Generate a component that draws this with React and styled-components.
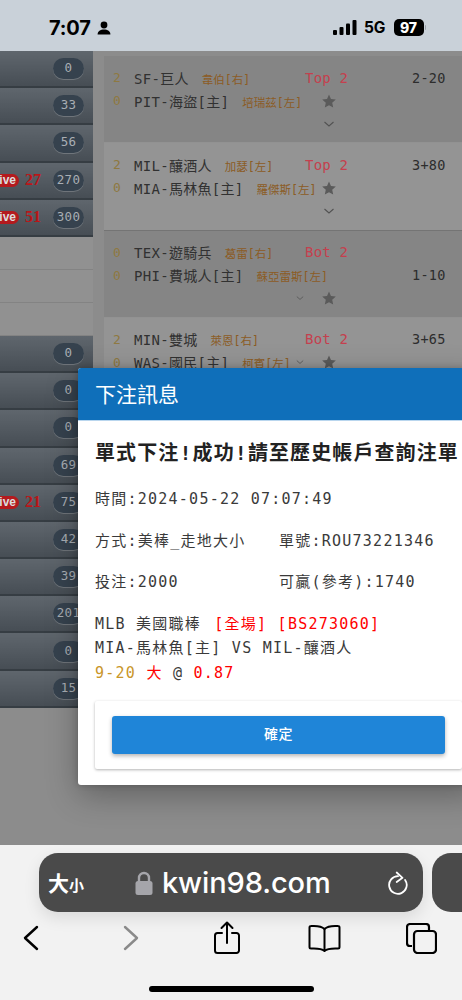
import React from "react";
import styled, { createGlobalStyle } from "styled-components";

const MONO = `"DejaVu Sans Mono", "Noto Sans CJK TC", monospace`;
const SANS = `Inter, "Noto Sans CJK TC", sans-serif`;

const Global = createGlobalStyle`
  html, body { margin: 0; padding: 0; background: #f2f2f2; }
  * { box-sizing: border-box; }
`;

const Screen = styled.div`
  width: 462px; height: 1000px; overflow: hidden; display: flex; flex-direction: column;
  font-family: ${MONO};
`;

const StatusBar = styled.header`
  height: 51px; flex: none; background: #c9d1d9; display: flex; align-items: center;
  padding: 4px 0 0 49px; color: #000;
`;
const Clock = styled.span`font: 700 20px/1 ${SANS}; letter-spacing: -0.2px;`;
const StatusRight = styled.div`margin-left: auto; margin-right: 36px; display: flex; align-items: center; gap: 0;`;
const Net = styled.span`font: 700 15.5px/1 ${SANS}; margin: 0 8px 0 7px;`;
const Battery = styled.span`
  width: 30px; height: 17px; border-radius: 5px; background: #000; color: #fff;
  font: 800 14px/17px ${SANS}; text-align: center; display: block;
`;
const BatteryCap = styled.span`width: 1.5px; height: 5px; margin-left: 1px; background: #9aa0a6; border-radius: 0 2px 2px 0;`;

const Viewport = styled.main`
  height: 794px; flex: none; position: relative; overflow: hidden; background: #f1f1f1;
  display: flex; align-items: flex-start;
`;
const Dim = styled.div`position: absolute; inset: 0; background: rgba(0,0,0,.42);`;

const Sidebar = styled.aside`width: 93px; flex: none; overflow: hidden; display: flex; flex-direction: column;`;
const DarkRow = styled.div`
  height: 37.2px; display: flex; align-items: center; justify-content: flex-end; padding-right: 9px;
  background: linear-gradient(#a4b0bc 0%, #96a2ae 35%, #7a8692 100%);
  border-bottom: 2px solid #5e6974; white-space: nowrap; flex: none;
`;
const LightRow = styled.div`
  height: 33px; background: #fafafa; border-bottom: 1px solid #e2e2e2; flex: none;
`;
const LiveBadge = styled.span`
  position: relative; z-index: 1;
  flex: none; width: 34px; height: 13px; border-radius: 7px; background: #b41a1e; color: #ddd;
  font: 700 12px/13px "Liberation Sans", sans-serif; text-align: right; padding-right: 3px; margin-right: 6px;
`;
const LiveCount = styled.span`
  position: relative; z-index: 1;
  flex: none; width: 16px; margin-right: 12px; color: #bb1518; font: 700 16px/1 "Liberation Serif", serif;
`;
const Pill = styled.span`
  position: relative; z-index: 1;
  flex: none; width: 31px; height: 21px; border-radius: 11px; background: #36424e; color: #a9aeb4;
  box-shadow: 0 1px 0 rgba(255,255,255,.2);
  font: 400 12.5px/20px ${MONO}; letter-spacing: .3px; text-align: center; overflow: hidden;
`;

const Main = styled.section`
  margin: 5px 0 0 11px; flex: 1; min-width: 0; display: flex; flex-direction: column;
`;
const Card = styled.article`
  height: 87.3px; padding: 10px 0 0 9px; background: ${p => (p.$alt ? "#ffffff" : "#e6e6e6")};
  border-bottom: 1px solid ${p => (p.$alt ? "#c8c8c8" : "#fbfbfb")};
  display: grid; grid-template-columns: 21px 160px 11px 107px 1fr; grid-auto-rows: 23px; align-items: center;
  white-space: nowrap;
`;
const Score = styled.span`grid-column: 1; color: #f5d070; font-size: 13px;`;
const Team = styled.div`grid-column: 2 / span 2; font-size: 14px; letter-spacing: .3px; color: #555;`;
const Pitcher = styled.span`margin-left: 13px; font-size: 11.5px; letter-spacing: 0; color: #f0a040;`;
const Status = styled.span`
  position: relative; z-index: 1;
  grid-column: 4; color: #c4404e; font-size: 14px; letter-spacing: .2px;
`;
const Value = styled.span`grid-column: 5; color: #4e4e4e; font-size: 13.5px; letter-spacing: .3px;`;
const StarCell = styled.span`grid-column: 4; margin-left: 17px; display: flex; color: #9b9b9b;`;
const ChevRight = styled.span`grid-column: 4; margin-left: 17px; display: flex; color: #8d8d8d;`;
const ChevLeft = styled.span`grid-column: 3; margin-left: 1px; display: flex; color: #8d8d8d;`;

const Modal = styled.div`
  position: absolute; z-index: 2; left: 78px; top: 317px; width: 401px; height: 417px; background: #fff;
  border-radius: 3px; box-shadow: 0 10px 32px rgba(0,0,0,.3), 0 0 6px rgba(0,0,0,.2);
  display: flex; flex-direction: column; overflow: hidden;
`;
const ModalHead = styled.div`
  height: 53px; flex: none; background: #0f6fba; color: #fff; padding-left: 17px;
  font: 400 21px/51px "Noto Sans CJK TC", sans-serif; border-bottom: 1px solid #b9d6ee;
`;
const ModalBody = styled.div`padding: 19px 17px 0 17px; flex: 1; color: #333; display: flex; flex-direction: column;`;
const Title = styled.h2`
  margin: 0 0 23px; font: 700 20px/26px ${MONO}; letter-spacing: 1.1px; color: #222; white-space: nowrap;
`;
const InfoRow = styled.div`
  display: grid; grid-template-columns: 184px 1fr; height: 41.5px; font-size: 15px; letter-spacing: 1.24px;
  line-height: 20px; white-space: nowrap; color: #3a3a3a;
`;
const Ticket = styled.div`margin-top: -2px; font-size: 15px; letter-spacing: 1.24px; line-height: 24.5px; white-space: nowrap; color: #3a3a3a;`;
const Red = styled.span`color: #f00;`;
const RedTag = styled(Red)`margin-left: 3px;`;
const Gold = styled.span`color: #c9962a;`;
const ButtonCard = styled.div`
  margin: 16px 0 0 0; width: 367px; height: 68px; padding: 15px 17px; background: #fff; border-radius: 2px;
  box-shadow: 0 1px 3px rgba(0,0,0,.3);
`;
const Confirm = styled.button`
  display: block; width: 333px; height: 38px; border: 0; border-radius: 3px; background: #1f85d8; color: #fff;
  font: 500 14px/34px "Noto Sans CJK TC", sans-serif; padding: 0 0 4px; letter-spacing: .5px;
  box-shadow: 0 2px 4px rgba(0,0,0,.3);
`;

const Safari = styled.footer`
  flex: 1; background: #f2f2f2; display: flex; flex-direction: column; padding-top: 8px;
`;
const UrlRow = styled.div`display: flex; gap: 9px; padding-left: 39px; height: 59px; flex: none;`;
const UrlBar = styled.div`
  width: 384px; flex: none; border-radius: 19px; background: #4a4a4a; color: #fff; display: flex; align-items: center;
  padding: 0 15px 0 9px; box-shadow: 0 6px 16px rgba(0,0,0,.1);
`;
const NextTab = styled.div`flex: 1; border-radius: 19px 0 0 19px; background: #4a4a4a;`;
const Aa = styled.span`font: 700 21px/1 "Noto Sans CJK TC", sans-serif; width: 87px; flex: none; white-space: nowrap;`;
const AaSmall = styled.span`font-size: 15px;`;
const Host = styled.span`font: 500 29px/1 ${SANS}; margin-left: 9px; letter-spacing: -.1px;`;
const Reload = styled.span`margin-left: auto; display: flex;`;
const Tools = styled.nav`
  height: 52px; flex: none; display: grid; grid-template-columns: 62px 138px 54px 140px 54px; justify-items: center; align-items: center;
`;
const HomeBar = styled.div`width: 165px; height: 6px; border-radius: 3px; background: #000; margin: 22px 0 0 149px;`;

const upper = [["0"], ["33"], ["56"], ["270", "27"], ["300", "51"]];
const lower = [["0"], ["0"], ["0"], ["69"], ["75", "21"], ["42"], ["39"], ["201"], ["0"], ["15"]];

const games = [
  { a: ["2", "SF-巨人", "韋伯[右]"], b: ["0", "PIT-海盜[主]", "培瑞茲[左]"], st: "Top 2", v: "2-20", vRow: 1, mode: "stack" },
  { a: ["2", "MIL-釀酒人", "加瑟[左]"], b: ["0", "MIA-馬林魚[主]", "羅傑斯[左]"], st: "Top 2", v: "3+80", vRow: 1, mode: "stack", alt: true },
  { a: ["0", "TEX-遊騎兵", "葛雷[右]"], b: ["0", "PHI-費城人[主]", "蘇亞雷斯[左]"], st: "Bot 2", v: "1-10", vRow: 2, mode: "row3" },
  { a: ["2", "MIN-雙城", "萊恩[右]"], b: ["0", "WAS-國民[主]", "柯賓[左]"], st: "Bot 2", v: "3+65", vRow: 1, mode: "row2", alt: true },
];

const Star = () => (
  <svg width="14" height="14" viewBox="0 0 24 24" fill="currentColor">
    <path d="M12 1l3.4 7.6 8.3.9-6.2 5.6 1.7 8.2L12 19.2l-7.2 4.1 1.7-8.2L.3 9.5l8.3-.9z" />
  </svg>
);
const Chevron = () => (
  <svg width="14" height="14" viewBox="0 0 14 14" fill="none" stroke="currentColor" strokeWidth="1.1">
    <path d="M2.5 5l4.5 4 4.5-4" />
  </svg>
);

function Game({ g }) {
  const row3 = g.mode === "row3";
  const row2 = g.mode === "row2";
  return (
    <Card $alt={g.alt}>
      <Score style={{ gridRow: 1 }}>{g.a[0]}</Score>
      <Team style={{ gridRow: 1 }}>{g.a[1]}<Pitcher>{g.a[2]}</Pitcher></Team>
      <Status style={{ gridRow: 1 }}>{g.st}</Status>
      <Value style={{ gridRow: g.vRow }}>{g.v}</Value>
      <Score style={{ gridRow: 2 }}>{g.b[0]}</Score>
      <Team style={{ gridRow: 2 }}>{g.b[1]}<Pitcher>{g.b[2]}</Pitcher></Team>
      {g.mode === "stack" && (
        <>
          <StarCell style={{ gridRow: 2 }}><Star /></StarCell>
          <ChevRight style={{ gridRow: 3 }}><Chevron /></ChevRight>
        </>
      )}
      {(row3 || row2) && (
        <>
          <ChevLeft style={{ gridRow: row3 ? 3 : 2 }}><Chevron /></ChevLeft>
          <StarCell style={{ gridRow: row3 ? 3 : 2 }}><Star /></StarCell>
        </>
      )}
    </Card>
  );
}

function SideRow({ n, live }) {
  return (
    <DarkRow>
      {live && <LiveBadge>Live</LiveBadge>}
      {live && <LiveCount>{live}</LiveCount>}
      <Pill>{n}</Pill>
    </DarkRow>
  );
}

export default function App() {
  return (
    <Screen>
      <Global />
      <StatusBar>
        <Clock>7:07</Clock>
        <svg width="14" height="14" viewBox="0 0 14 14" style={{ marginLeft: 6 }} fill="#000">
          <circle cx="7" cy="4" r="3.4" />
          <path d="M.6 13.5c0-3.2 2.8-5 6.4-5s6.400 1.800 6.400 5z" />
        </svg>
        <StatusRight>
          <svg width="24" height="15" viewBox="0 0 24 15" fill="#000">
            <rect x="0" y="10" width="4" height="5" rx="1" />
            <rect x="6.500" y="7" width="4" height="8" rx="1" />
            <rect x="13" y="3.500" width="4" height="11.500" rx="1" />
            <rect x="19.500" y="0" width="4" height="15" rx="1" />
          </svg>
          <Net>5G</Net>
          <Battery>97</Battery>
          <BatteryCap />
        </StatusRight>
      </StatusBar>

      <Viewport>
        <Sidebar>
          {upper.map((r, i) => <SideRow key={i} n={r[0]} live={r[1]} />)}
          <LightRow /><LightRow /><LightRow />
          {lower.map((r, i) => <SideRow key={i} n={r[0]} live={r[1]} />)}
        </Sidebar>
        <Main>
          {games.map((g, i) => <Game key={i} g={g} />)}
        </Main>
        <Dim />
        <Modal>
          <ModalHead>下注訊息</ModalHead>
          <ModalBody>
            <Title>單式下注!成功!請至歷史帳戶查詢注單</Title>
            <InfoRow><span>時間:2024-05-22 07:07:49</span></InfoRow>
            <InfoRow><span>方式:美棒_走地大小</span><span>單號:ROU73221346</span></InfoRow>
            <InfoRow><span>投注:2000</span><span>可贏(參考):1740</span></InfoRow>
            <Ticket>
              <div>MLB 美國職棒 <RedTag>[全場] [BS273060]</RedTag></div>
              <div>MIA-馬林魚[主] VS MIL-釀酒人</div>
              <div><Gold>9-20</Gold> <Red>大</Red> @ <Red>0.87</Red></div>
            </Ticket>
            <ButtonCard><Confirm>確定</Confirm></ButtonCard>
          </ModalBody>
        </Modal>
      </Viewport>

      <Safari>
        <UrlRow>
          <UrlBar>
            <Aa>大<AaSmall>小</AaSmall></Aa>
            <svg width="18" height="24" viewBox="0 0 18 24" fill="#a5a5aa">
              <path d="M4 11V7a5 5 0 0110 0v4" fill="none" stroke="#a5a5aa" strokeWidth="2.4" />
              <rect x="0.5" y="10" width="17" height="14" rx="2.5" />
            </svg>
            <Host>kwin98.com</Host>
            <Reload>
              <svg width="20" height="24" viewBox="0 0 20 24" fill="none" stroke="#fff" strokeWidth="1.8" strokeLinecap="round" strokeLinejoin="round">
                <path d="M10 5.200A8.800 8.800 0 1 0 17.100 8.900" />
                <path d="M8.700 1.500L14.500 6.800 8.700 11" />
              </svg>
            </Reload>
          </UrlBar>
          <NextTab />
        </UrlRow>
        <Tools>
          <svg width="16" height="26" viewBox="0 0 16 26" fill="none" stroke="#000" strokeWidth="2.4" strokeLinecap="round" strokeLinejoin="round">
            <path d="M14 2L2 13l12 11" />
          </svg>
          <svg width="16" height="26" viewBox="0 0 16 26" fill="none" stroke="#8a8a8a" strokeWidth="2.4" strokeLinecap="round" strokeLinejoin="round">
            <path d="M2 2l12 11L2 24" />
          </svg>
          <svg width="28" height="34" viewBox="0 0 28 34" fill="none" stroke="#000" strokeWidth="2" strokeLinecap="round" strokeLinejoin="round">
            <path d="M9 12H4.500A2.500 2.500 0 002 14.500V29.500A2.500 2.500 0 004.500 32h19a2.500 2.500 0 002.500-2.500V14.500a2.500 2.500 0 00-2.500-2.500H19" />
            <path d="M14 22V2M8.500 7L14 1.500 19.500 7" />
          </svg>
          <svg width="33" height="28" viewBox="0 0 33 28" fill="none" stroke="#000" strokeWidth="2" strokeLinecap="round" strokeLinejoin="round">
            <path d="M16.500 5C14 2.500 10 1.500 3 2c-1 0-1.500.5-1.500 1.500V23c0 1 .5 1.500 1.500 1.500 6-.3 11 .2 13.500 2.500 2.500-2.300 7.500-2.800 13.500-2.500 1 0 1.500-.5 1.500-1.500V3.500c0-1-.5-1.500-1.500-1.500-7-.5-11 .5-13.500 3z" />
            <path d="M16.500 5v21" />
          </svg>
          <svg width="31" height="31" viewBox="0 0 31 31" fill="none" stroke="#000" strokeWidth="2.200" strokeLinejoin="round">
            <path d="M6 23H4a3 3 0 01-3-3V4a3 3 0 013-3h16a3 3 0 013 3v3" />
            <rect x="8" y="8" width="22" height="22" rx="3.500" />
          </svg>
        </Tools>
        <HomeBar />
      </Safari>
    </Screen>
  );
}
